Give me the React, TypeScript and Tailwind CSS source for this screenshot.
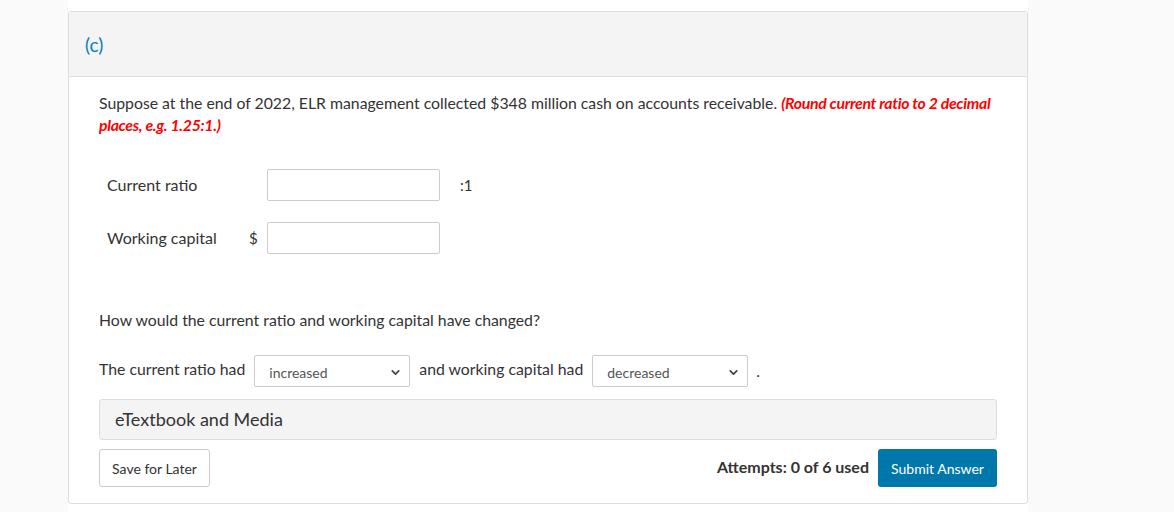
import { ChevronDown } from 'lucide-react';

function Select({ value }: { value: string }) {
  return (
    <div className="relative w-[156px] h-8 border border-[#ccc] rounded-[2px] bg-white flex items-center pl-[14px] text-[14px] text-[#555] pt-[3px]">
      {value}
      <ChevronDown className="absolute right-[7px] top-[10px] w-[13px] h-[13px] text-[#444]" strokeWidth={3.2} />
    </div>
  );
}

export default function App() {
  return (
    <div className="min-h-[512px] bg-[#fafafa] text-[#333]" style={{ fontFamily: 'Lato, "Open Sans", sans-serif' }}>
      <div className="ml-[68px] w-[960px] bg-white pt-[11px] min-h-[512px]">
        <div className="border border-[#ddd] rounded-[3px] pb-[16px]">
          {/* Header */}
          <div className="h-[65px] bg-[#f4f4f4] border-b border-[#ddd] flex items-center pl-[16px] pt-[2px]">
            <span className="text-[19px] text-[#0a7cba]">(c)</span>
          </div>

          <div className="px-[30px] pt-[15px]">
            <p className="text-[15.8px] leading-[22px] text-[#333]">
              Suppose at the end of 2022, ELR management collected $348 million cash on accounts receivable.{' '}
              <em className="font-bold text-[#ff0000] tracking-[-0.3px]">(Round current ratio to 2 decimal places, e.g. 1.25:1.)</em>
            </p>

            {/* Inputs */}
            <div className="pl-[8px] mt-[33px] flex flex-col gap-[21px]">
              <div className="flex items-center h-8">
                <span className="w-[142px] text-[16px]">Current ratio</span>
                <span className="w-[18px]"></span>
                <div className="w-[173px] h-8 border border-[#ccc] rounded-[2px]"></div>
                <span className="ml-[20px] text-[15px]">:1</span>
              </div>
              <div className="flex items-center h-8">
                <span className="w-[142px] text-[16px]">Working capital</span>
                <span className="w-[18px] text-[15px]">$</span>
                <div className="w-[173px] h-8 border border-[#ccc] rounded-[2px]"></div>
              </div>
            </div>

            <p className="mt-[55px] text-[15.8px] leading-[22px]">How would the current ratio and working capital have changed?</p>

            <div className="mt-[24px] flex items-center gap-[9px] text-[15.8px]">
              <span className="-mt-[4px]">The current ratio had</span>
              <Select value="increased" />
              <span className="-mt-[4px]">and working capital had</span>
              <Select value="decreased" />
              <span className="-ml-[1px]">.</span>
            </div>

            {/* eTextbook */}
            <div className="mt-[12px] h-[41px] bg-[#f4f4f4] border border-[#ddd] rounded-[3px] flex items-center pl-[15px] text-[18px]">
              eTextbook and Media
            </div>

            {/* Footer */}
            <div className="mt-[9px] flex items-center justify-between">
              <button className="h-[38px] w-[111px] border border-[#ccc] rounded-[3px] bg-white text-[14px] text-[#333]">
                Save for Later
              </button>
              <div className="flex items-center gap-[9px]">
                <span className="text-[16px] font-bold text-[#333] -mt-[2px]">Attempts: 0 of 6 used</span>
                <button className="h-[38px] w-[119px] rounded-[3px] bg-[#0077aa] text-white text-[14px]">
                  Submit Answer
                </button>
              </div>
            </div>
          </div>
        </div>
      </div>
    </div>
  );
}
